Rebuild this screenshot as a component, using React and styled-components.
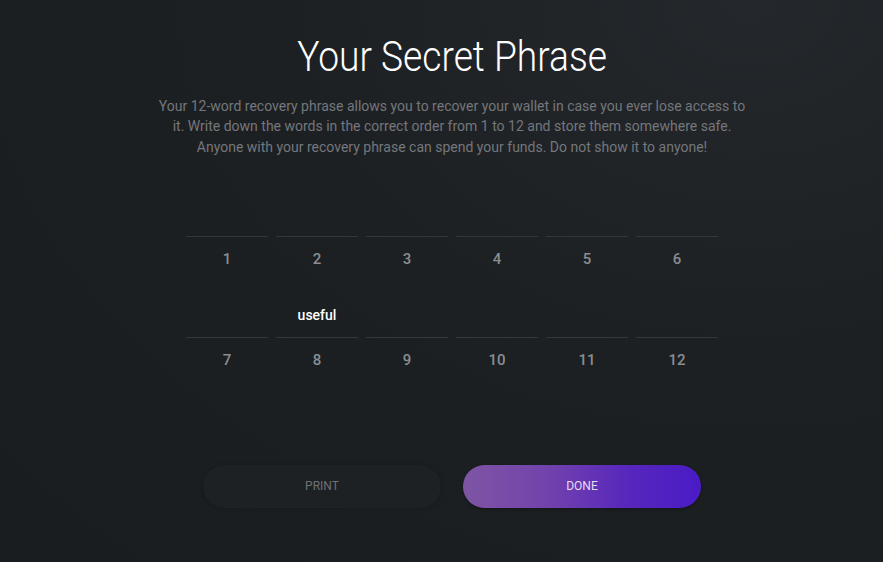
import React from "react";
import styled, { createGlobalStyle } from "styled-components";

const Global = createGlobalStyle`
  html, body { margin: 0; padding: 0; }
  body {
    background: radial-gradient(ellipse at 85% 0%, #24272b 0%, #1d2023 45%, #1a1d20 100%);
    min-height: 562px;
    font-family: Roboto, "Noto Sans", sans-serif;
  }
`;

const Page = styled.main`
  width: 883px;
  height: 562px;
  box-sizing: border-box;
  padding: 31px 0 0 21px;
  display: flex;
  flex-direction: column;
  align-items: center;
`;

const Title = styled.h1`
  margin: 0;
  font-weight: 300;
  font-size: 42px;
  line-height: 52px;
  color: #ffffff;
  transform: scaleX(0.885);
`;

const Intro = styled.p`
  margin: 13px 0 0;
  width: 600px;
  text-align: center;
  font-size: 14px;
  line-height: 20.3px;
  color: #74777b;
`;

const Grid = styled.div`
  margin-top: 35px;
  display: grid;
  grid-template-columns: repeat(6, 82px);
  column-gap: 8px;
  row-gap: 12px;
`;

const Cell = styled.div`
  display: flex;
  flex-direction: column;
  align-items: center;
`;

const Word = styled.div`
  height: 44px;
  line-height: 44px;
  width: 100%;
  text-align: center;
  font-size: 14px;
  font-weight: 500;
  color: #ffffff;
  border-bottom: 1px solid #33363a;
`;

const Num = styled.div`
  height: 44px;
  line-height: 44px;
  font-size: 15px;
  font-weight: 500;
  color: #8a8d91;
`;

const Actions = styled.div`
  margin-top: 83px;
  display: flex;
  gap: 22px;
`;

const Button = styled.button`
  width: 238px;
  height: 43px;
  border: none;
  border-radius: 22px;
  font-family: Roboto, sans-serif;
  font-size: 12px;
  font-weight: 400;
  text-transform: uppercase;
  cursor: pointer;
  background: ${(p) =>
    p.$primary
      ? "linear-gradient(90deg, #7e55a3 0%, #7243ac 35%, #5726bd 70%, #4a1bc6 100%)"
      : "#1e2124"};
  color: ${(p) => (p.$primary ? "#e4dcf2" : "#6e7175")};
  box-shadow: ${(p) =>
    p.$primary ? "0 1px 3px rgba(0,0,0,0.4)" : "0 0 4px rgba(0,0,0,0.25)"};
`;

const words = ["", "", "", "", "", "", "", "useful", "", "", "", ""];

export default function App() {
  return (
    <>
      <Global />
      <Page>
        <Title>Your Secret Phrase</Title>
        <Intro>
          Your 12-word recovery phrase allows you to recover your wallet in case
          you ever lose access to it. Write down the words in the correct order
          from 1 to 12 and store them somewhere safe. Anyone with your recovery
          phrase can spend your funds. Do not show it to anyone!
        </Intro>
        <Grid>
          {words.map((w, i) => (
            <Cell key={i}>
              <Word>{w}</Word>
              <Num>{i + 1}</Num>
            </Cell>
          ))}
        </Grid>
        <Actions>
          <Button>Print</Button>
          <Button $primary>Done</Button>
        </Actions>
      </Page>
    </>
  );
}
